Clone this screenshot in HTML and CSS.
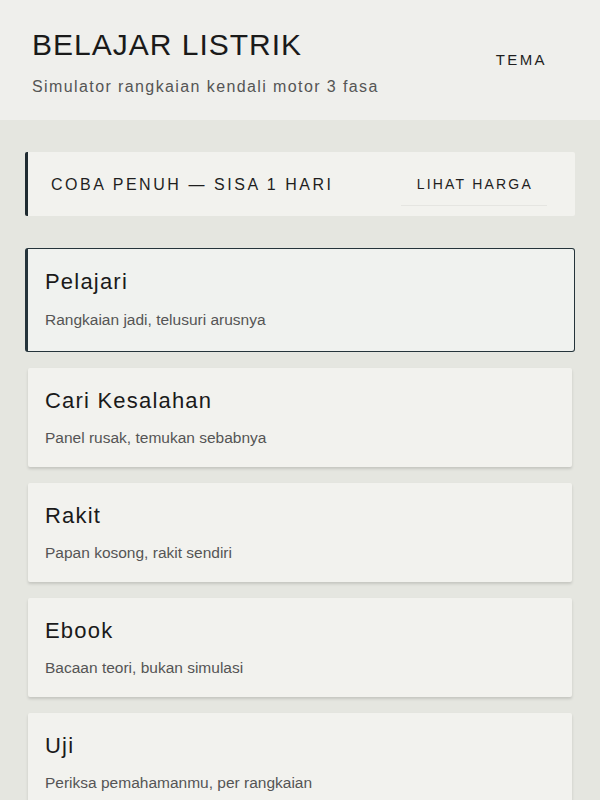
FILE: index.html
```html
<!DOCTYPE html>
<html lang="id">
<head>
<meta charset="utf-8">
<title>Belajar Listrik</title>
<link rel="stylesheet" href="styles.css">
</head>
<body>
<header class="top">
  <div class="brand">
    <h1 class="title">BELAJAR LISTRIK</h1>
    <p class="tagline">Simulator rangkaian kendali motor 3 fasa</p>
  </div>
  <button class="ghost-btn theme-btn">TEMA</button>
</header>
<main class="main">
  <section class="trial">
    <span class="trial-text">COBA PENUH — SISA 1 HARI</span>
    <button class="ghost-btn price-btn">LIHAT HARGA</button>
  </section>
  <nav class="menu">
    <a class="card card-active" href="#">
      <span class="card-title">Pelajari</span>
      <span class="card-sub">Rangkaian jadi, telusuri arusnya</span>
    </a>
    <a class="card" href="#">
      <span class="card-title">Cari Kesalahan</span>
      <span class="card-sub">Panel rusak, temukan sebabnya</span>
    </a>
    <a class="card" href="#">
      <span class="card-title">Rakit</span>
      <span class="card-sub">Papan kosong, rakit sendiri</span>
    </a>
    <a class="card" href="#">
      <span class="card-title">Ebook</span>
      <span class="card-sub">Bacaan teori, bukan simulasi</span>
    </a>
    <a class="card" href="#">
      <span class="card-title">Uji</span>
      <span class="card-sub">Periksa pemahamanmu, per rangkaian</span>
    </a>
  </nav>
</main>
</body>
</html>
```

FILE: styles.css
```css
* { box-sizing: border-box; }

html, body {
  margin: 0;
  padding: 0;
}

body {
  background: #e5e6e0;
  font-family: "Liberation Sans", Arial, sans-serif;
  color: #1b1b1b;
}

.top {
  background: #efefec;
  height: 120px;
  display: flex;
  justify-content: space-between;
  align-items: center;
  padding: 0 32px;
}

.brand {
  display: flex;
  flex-direction: column;
  gap: 16px;
  padding-top: 4px;
}

.title {
  margin: 0;
  font-size: 30px;
  font-weight: 400;
  letter-spacing: 1px;
  line-height: normal;
  color: #1a1a1a;
}

.tagline {
  margin: 0;
  font-size: 16px;
  letter-spacing: 1.4px;
  color: #555555;
}

.ghost-btn {
  font-family: "Liberation Sans", Arial, sans-serif;
  background: transparent;
  border: 0;
  border-bottom: 1px solid rgba(0, 0, 0, 0.05);
  color: #1f1f1f;
  cursor: pointer;
  line-height: 16px;
}

.theme-btn {
  font-size: 15px;
  letter-spacing: 2.4px;
  padding: 12px 21px 12px 23px;
  border-bottom-color: transparent;
}

.main {
  padding: 32px 25px;
  display: flex;
  flex-direction: column;
  gap: 32px;
}

.trial {
  height: 64px;
  background: #f2f2ee;
  border-left: 3px solid #1f2b31;
  border-radius: 2px;
  display: flex;
  justify-content: space-between;
  align-items: center;
  padding: 0 28px 0 23px;
}

.trial-text {
  font-size: 16px;
  letter-spacing: 2.55px;
  color: #1f1f1f;
  padding-top: 2px;
}

.price-btn {
  font-size: 14px;
  letter-spacing: 2.2px;
  padding: 14px 14px 13px 16px;
}

.menu {
  display: flex;
  flex-direction: column;
  gap: 16px;
}

.card {
  display: flex;
  flex-direction: column;
  gap: 15px;
  margin: 0 3px;
  padding: 20px 17px 20px;
  background: #f2f2ee;
  border-radius: 2px;
  box-shadow: 0 2px 3px rgba(0, 0, 0, 0.14);
  text-decoration: none;
  color: inherit;
}

.card-active {
  margin: 0;
  gap: 16px;
  padding: 20px 17px 22px;
  border: 1px solid #25343b;
  border-left-width: 3px;
  border-radius: 3px;
  box-shadow: none;
  background: #f0f2ef;
}

.card-title {
  font-size: 22px;
  letter-spacing: 1.2px;
  line-height: normal;
  color: #1a1a1a;
}

.card-sub {
  font-size: 15.5px;
  line-height: normal;
  color: #555555;
}
```
